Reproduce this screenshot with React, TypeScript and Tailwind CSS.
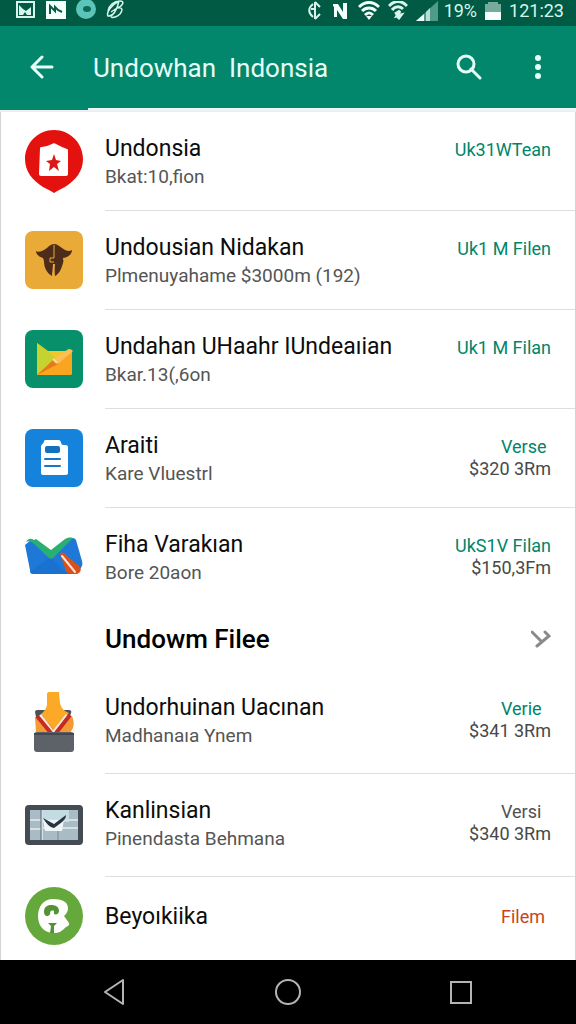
import type { ReactNode } from 'react';

interface FileItem {
  title: string;
  subtitle?: string;
  status: string;
  price?: string;
  tone: 'green' | 'gray' | 'orange';
  icon: ReactNode;
}

const TONES = {
  green: 'text-[#00856a]',
  gray: 'text-[#505050]',
  orange: 'text-[#c7431c]',
};

function PinIcon() {
  return (
    <svg viewBox="0 0 58 64" className="w-[58px] h-16" aria-hidden="true">
      <path d="M29 1C13 1 0 14 0 30c0 12 7 21 18 28 4 2 8 4 11 6 3-2 7-4 11-6 11-7 18-16 18-28C58 14 45 1 29 1Z" fill="#e3120f" />
      <path d="M15 19c0-1 1-1 2-1l5-1 5-2c1-1 3-1 4 0l6 3 5 2c1 0 1 1 1 2v23c0 1-1 2-2 2H16c-1 0-2-1-2-2Z" fill="#fff" />
      <path d="M29 25l2 6 5 1-4 3 2 7-5-4-5 4 1-7-4-3 6-1Z" fill="#dc1717" />
    </svg>
  );
}

function HatIcon() {
  return (
    <svg viewBox="0 0 58 58" className="w-[58px] h-[58px]" aria-hidden="true">
      <rect width="58" height="58" rx="8" fill="#eaaa38" />
      <path d="M11 20c2 2 7 0 11-3 3-3 5-4 7-4 3 0 5 2 8 4 4 3 7 4 10 2 0 4-3 7-9 8 0 2 1 3 0 5-2 7-4 11-8 13l-1-9-2 9c-5-3-8-8-8-15l-1-3c-4-1-7-4-7-7Z" fill="#4d2c1a" />
      <path d="M29 14v13h-4v4h4" fill="none" stroke="#eaaa38" strokeWidth="1" />
      <path d="M29 33l-1 12" stroke="#eaaa38" strokeWidth="2" />
    </svg>
  );
}

function FolderIcon() {
  return (
    <svg viewBox="0 0 58 58" className="w-[58px] h-[58px]" aria-hidden="true">
      <rect width="58" height="58" rx="8" fill="#07906a" />
      <path d="M12 13l11 8h22c1 0 2 1 2 2v20c0 1-1 2-2 2H12Z" fill="#f3c62c" />
      <path d="M12 13l18 14-3 8-15 10Z" fill="#c5d331" />
      <path d="M12 45l18-14 17-8v20c0 1-1 2-2 2Z" fill="#f9a51f" />
      <path d="M12 45l16-15 5 4Z" fill="#e5791b" />
      <path d="M29 29l13-9c2-2 4-1 6 1L34 33c-2 1-4 0-5-4Z" fill="#fbbf55" />
      <path d="M28 29l4 4" stroke="#f4e4a0" strokeWidth="2" />
    </svg>
  );
}

function ClipboardIcon() {
  return (
    <svg viewBox="0 0 58 58" className="w-[58px] h-[58px]" aria-hidden="true">
      <rect width="58" height="58" rx="8" fill="#1583dc" />
      <path d="M20 11h14c2 0 2 5 4 5h3c1 0 2 1 2 2v26c0 1-1 2-2 2H18c-1 0-2-1-2-2V18c0-3 3-3 3-6Z" fill="#fff" />
      <rect x="20" y="17" width="15" height="7" rx="2" fill="#1270bf" />
      <path d="M20 30h15M20 37h15" stroke="#1677c8" strokeWidth="2" strokeLinecap="round" />
    </svg>
  );
}

function MailIcon() {
  return (
    <svg viewBox="0 0 58 40" className="w-[58px] h-10" aria-hidden="true">
      <path d="M0 8l6-5 20 17L45 2c2-2 5-1 6 1l6 21c1 3 0 6-2 8l-5 5H9c-3 0-4-1-4-4Z" fill="#1e78d7" />
      <path d="M5 35l20-15 18 17H9c-2 0-4 0-4-2Z" fill="#1766c2" opacity=".4" />
      <path d="M1 5c2-4 5-4 8-2l2-1 15 11L40 2c2-1 5-2 8-1L28 21c-1 1-3 1-4 0L8 6C5 4 3 4 1 5Z" fill="#2aaf72" />
      <path d="M35 17c1-2 3-2 5 0l15 13c2 3 0 6-3 7h-6c-2 0-4-1-5-3Z" fill="#d9501c" />
      <path d="M37 19l13 16" stroke="#ffe3d2" strokeWidth="2" strokeLinecap="round" />
    </svg>
  );
}

function BoxIcon() {
  return (
    <svg viewBox="0 0 42 62" className="w-[42px] h-[62px]" aria-hidden="true">
      <path d="M2 21c0-1 1-2 2-2h32c2 0 3 2 2 3l-2 6-3 13H6Z" fill="#4c525b" />
      <path d="M2 26l5 1h28l4-2c3 7 2 12-2 17H3Z" fill="#f49a35" />
      <path d="M14 3c0-1 1-2 2-2h10l1 11c1 5 4 8 9 10L22 39 8 23c3-2 5-5 6-9Z" fill="#fba927" />
      <path d="M7 24l13 18M34 24L20 42" stroke="#fbe9e4" strokeWidth="3" />
      <path d="M4 25l14 17M37 24L23 42" stroke="#c62a24" strokeWidth="4" />
      <rect x="1" y="41" width="40" height="20" rx="3" fill="#5d6168" />
      <path d="M1 43h40" stroke="#44474e" strokeWidth="2" />
    </svg>
  );
}

function TabletIcon() {
  return (
    <svg viewBox="0 0 58 40" className="w-[58px] h-10" aria-hidden="true">
      <rect width="58" height="40" rx="4" fill="#454b53" />
      <rect x="5" y="5" width="48" height="30" fill="#a9bbc5" />
      <path d="M18 5h26v12H18Z" fill="#c2dce2" />
      <path d="M5 15h12M5 24h12M17 5v30M17 23h36M17 15h36M33 23v12" stroke="#d3e1e6" strokeWidth="2" />
      <path d="M16 5v30M33 25v10" stroke="#58656e" strokeWidth="1" />
      <path d="M18 15h21l-2 11H20Z" fill="#eff5f7" />
      <path d="M18 13l11 6 12-9c0 5-5 8-12 13-5-1-8-5-11-10Z" fill="#273442" />
    </svg>
  );
}

function BadgeIcon() {
  return (
    <svg viewBox="0 0 58 58" className="w-[58px] h-[58px]" aria-hidden="true">
      <circle cx="29" cy="29" r="29" fill="#65a83b" />
      <path d="M28 12c9 0 15 3 15 9 0 4-2 6-4 8l5 7c1 3-2 3-4 5-3 3-6 5-11 5-10 0-16-7-16-17s6-17 15-17Z" fill="#fff" />
      <path d="M19 25c0-5 3-7 7-7 5 0 8 2 8 6 0 3-3 4-5 3v-3c-2-1-3 0-4 1 1 2-1 4-3 4s-3-2-3-4Z" fill="#549236" />
      <path d="M23 36h9l-3 3v7h-4l1-7Z" fill="#549236" />
    </svg>
  );
}

const FILES: FileItem[] = [
  { title: 'Undonsia', subtitle: 'Bkat:10,fion', status: 'Uk31WTean', tone: 'green', icon: <PinIcon /> },
  { title: 'Undousian Nidakan', subtitle: 'Plmenuyahame $3000m (192)', status: 'Uk1 M Filen', tone: 'green', icon: <HatIcon /> },
  { title: 'Undahan UHaahr IUndeaıian', subtitle: 'Bkar.13(,6on', status: 'Uk1 M Filan', tone: 'green', icon: <FolderIcon /> },
  { title: 'Araiti', subtitle: 'Kare Vluestrl', status: 'Verse', price: '$320 3Rm', tone: 'green', icon: <ClipboardIcon /> },
  { title: 'Fiha Varakıan', subtitle: 'Bore 20aon', status: 'UkS1V Filan', price: '$150,3Fm', tone: 'green', icon: <MailIcon /> },
];

const MORE_FILES: FileItem[] = [
  { title: 'Undorhuinan Uacınan', subtitle: 'Madhanaıa Ynem', status: 'Verie', price: '$341 3Rm', tone: 'green', icon: <BoxIcon /> },
  { title: 'Kanlinsian', subtitle: 'Pinendasta Behmana', status: 'Versi', price: '$340 3Rm', tone: 'gray', icon: <TabletIcon /> },
  { title: 'Beyoıkiika', status: 'Filem', tone: 'orange', icon: <BadgeIcon /> },
];

function FileRow({ file, divider, roomy }: { file: FileItem; divider: boolean; roomy?: boolean }) {
  const padding = roomy ? 'items-start pt-[23px] pb-[23px]' : 'items-start pt-[23px] pb-[19px]';

  return (
    <li className="flex items-stretch pl-6 min-h-20">
      <div className="w-[58px] shrink-0 flex items-center justify-center pb-0.5">{file.icon}</div>
      <div
        className={`ml-[22px] flex-1 min-w-0 flex justify-between pr-6 border-b ${
          divider ? 'border-[#dcdfde]' : 'border-transparent'
        } ${file.subtitle ? padding : 'items-center'}`}
      >
        <div className="min-w-0">
          <p className="text-[23px] leading-7 text-[#0c0c0c]">{file.title}</p>
          {file.subtitle && <p className="text-[19px] leading-7 text-[#555555]">{file.subtitle}</p>}
        </div>
        <div className={`shrink-0 flex flex-col items-end text-[18px] leading-[22px] ${file.subtitle ? 'pt-1' : ''}`}>
          <p className={`min-w-[50px] ${TONES[file.tone]}`}>{file.status}</p>
          {file.price && <p className="text-[#484848]">{file.price}</p>}
        </div>
      </div>
    </li>
  );
}

function StatusBar() {
  return (
    <div className="h-[26px] bg-[#005a44] flex items-start justify-between pl-4 pr-3 text-[#d7f5ec]">
      <div className="flex items-center gap-2.5 h-5">
        <svg viewBox="0 0 20 18" className="w-5 h-[18px]" aria-hidden="true">
          <path d="M1 1h17v15H1Z" fill="none" stroke="currentColor" strokeWidth="2" />
          <path d="M3 14V4l4 4 3 2 5-4v8H11l-2-3-2 3Z" fill="currentColor" />
        </svg>
        <svg viewBox="0 0 20 18" className="w-5 h-[18px]" aria-hidden="true">
          <rect width="20" height="18" fill="#f2fffb" />
          <path d="M4 13V5l5 5V6l3 3 4 2" fill="none" stroke="#0a5a45" strokeWidth="2" />
        </svg>
        <svg viewBox="0 0 20 20" className="w-5 h-5" aria-hidden="true">
          <circle cx="10" cy="9" r="10" fill="#5cc4b8" />
          <ellipse cx="11" cy="9" rx="4" ry="3" fill="#0b6b55" />
        </svg>
        <svg viewBox="0 0 20 20" className="w-5 h-5" aria-hidden="true">
          <path d="M2 11C3 5 8 1 14 1c5 0 3 5-3 7 6-1 6 2 3 6-3 3-7 4-9 3M13 1C5 5 0 13 2 16c5 1 9-6 11-15M5 12l6-4" fill="none" stroke="currentColor" strokeWidth="1.5" />
        </svg>
      </div>
      <div className="flex items-center h-[21px]">
        <svg viewBox="0 0 14 20" className="w-3.5 h-5 mr-2.5" aria-hidden="true">
          <path d="M7 1v17M7 1l5 5M12 13l-5 5M5 3C0 7 0 12 5 16M3 8h4" fill="none" stroke="currentColor" strokeWidth="2" />
        </svg>
        <svg viewBox="0 0 16 18" className="w-4 h-[18px] mr-2.5" aria-hidden="true">
          <path d="M1 2h5l5 8V1h4v16h-4L5 8v7H2V5L1 4Z" fill="#f2fffb" />
        </svg>
        <svg viewBox="0 0 22 19" className="w-[22px] h-[19px] mr-2" aria-hidden="true">
          <path d="M1 6c6-6 14-6 20 0M4 10c4-4 10-4 14 0M7 14c3-3 5-3 8 0" fill="none" stroke="#f2fffb" strokeWidth="3" />
          <path d="M8 15h6l-3 4Z" fill="#f2fffb" />
        </svg>
        <svg viewBox="0 0 20 19" className="w-5 h-[19px] mr-2" aria-hidden="true">
          <path d="M1 5c6-6 12-6 18 0M4 9c3-4 8-4 11-1M7 13l5-3-3 5 4-1-3 4" fill="none" stroke="currentColor" strokeWidth="3" />
        </svg>
        <svg viewBox="0 0 22 20" className="w-[22px] h-5 mr-1.5" aria-hidden="true">
          <path d="M0 20L22 0v20Z" fill="#4e9c88" />
          <path d="M0 20l8-7v7Z" fill="#f2fffb" />
          <path d="M10 11l4-4v13h-4Z" fill="#b8ddd2" />
        </svg>
        <span className="text-[18px] leading-[21px]">19%</span>
        <svg viewBox="0 0 16 18" className="w-4 h-[18px] mx-2" aria-hidden="true">
          <path d="M0 2h3V0h10v2h3v8H0Z" fill="#75aa9d" />
          <path d="M0 10h16v8H0Z" fill="#f6fffc" />
        </svg>
        <span className="text-[18px] leading-[21px]">121:23</span>
      </div>
    </div>
  );
}

function Header() {
  return (
    <header className="bg-[#02876c]">
      <div className="h-[82px] flex items-center pl-[30px] pr-[26px] text-[#e5fff8]">
        <button type="button" aria-label="Back" className="w-6 h-6 mr-[39px]">
          <svg viewBox="0 0 24 24" className="w-6 h-6" fill="none" stroke="currentColor" strokeWidth="3" strokeLinecap="round" strokeLinejoin="round" aria-hidden="true">
            <path d="M22 12H3M12 2L2 12l10 10" />
          </svg>
        </button>
        <h1 className="flex-1 text-[26px] leading-8 pt-0.5">Undowhan&nbsp; Indonsia</h1>
        <button type="button" aria-label="Search" className="w-[26px] h-[26px] mr-11">
          <svg viewBox="0 0 26 26" className="w-[26px] h-[26px]" fill="none" stroke="currentColor" strokeWidth="3" strokeLinecap="round" aria-hidden="true">
            <circle cx="10" cy="10" r="8" />
            <path d="M15 15l9 9" />
          </svg>
        </button>
        <button type="button" aria-label="More options" className="w-6 h-6">
          <svg viewBox="0 0 24 24" className="w-6 h-6" fill="currentColor" aria-hidden="true">
            <circle cx="12" cy="3" r="3" />
            <circle cx="12" cy="12" r="3" />
            <circle cx="12" cy="21" r="3" />
          </svg>
        </button>
      </div>
      <div className="h-0.5 ml-[88px] bg-[#eafaf6]" />
      <div className="h-0.5 bg-[#eeeef0]" />
    </header>
  );
}

function NavBar() {
  return (
    <nav className="h-16 bg-black flex items-center justify-evenly text-[#b4b4b4]">
      <button type="button" aria-label="Back">
        <svg viewBox="0 0 26 26" className="w-[26px] h-[26px]" fill="none" stroke="currentColor" strokeWidth="2" strokeLinejoin="round" aria-hidden="true">
          <path d="M20 1v24L2 13Z" />
        </svg>
      </button>
      <button type="button" aria-label="Home" className="mx-11">
        <svg viewBox="0 0 26 26" className="w-[26px] h-[26px]" fill="none" stroke="currentColor" strokeWidth="2" aria-hidden="true">
          <circle cx="13" cy="13" r="12" />
        </svg>
      </button>
      <button type="button" aria-label="Recents">
        <svg viewBox="0 0 26 26" className="w-[26px] h-[26px]" fill="none" stroke="currentColor" strokeWidth="2" aria-hidden="true">
          <rect x="3" y="3" width="20" height="21" />
        </svg>
      </button>
    </nav>
  );
}

export default function App() {
  return (
    <div className="min-h-screen flex flex-col bg-white font-['Roboto',sans-serif]">
      <StatusBar />
      <Header />
      <main className="flex-1 border-x border-[#d2d5d4]">
        <ul>
          {FILES.map((file, i) => (
            <FileRow key={file.title} file={file} divider={i < FILES.length - 1} />
          ))}
        </ul>
        <h2>
          <button type="button" className="w-full h-16 flex items-center justify-between pl-[104px] pr-6 text-left">
            <span className="text-[26px] leading-8 font-medium text-black">Undowm Filee</span>
            <svg viewBox="0 0 20 18" className="w-5 h-[18px]" fill="none" stroke="#8a8a8a" strokeWidth="3" strokeLinecap="round" aria-hidden="true">
              <path d="M1 2l9 9M14 2l4 4L6 16" />
            </svg>
          </button>
        </h2>
        <ul>
          {MORE_FILES.map((file, i) => (
            <FileRow key={file.title} file={file} divider={i < MORE_FILES.length - 1} roomy />
          ))}
        </ul>
      </main>
      <NavBar />
    </div>
  );
}
